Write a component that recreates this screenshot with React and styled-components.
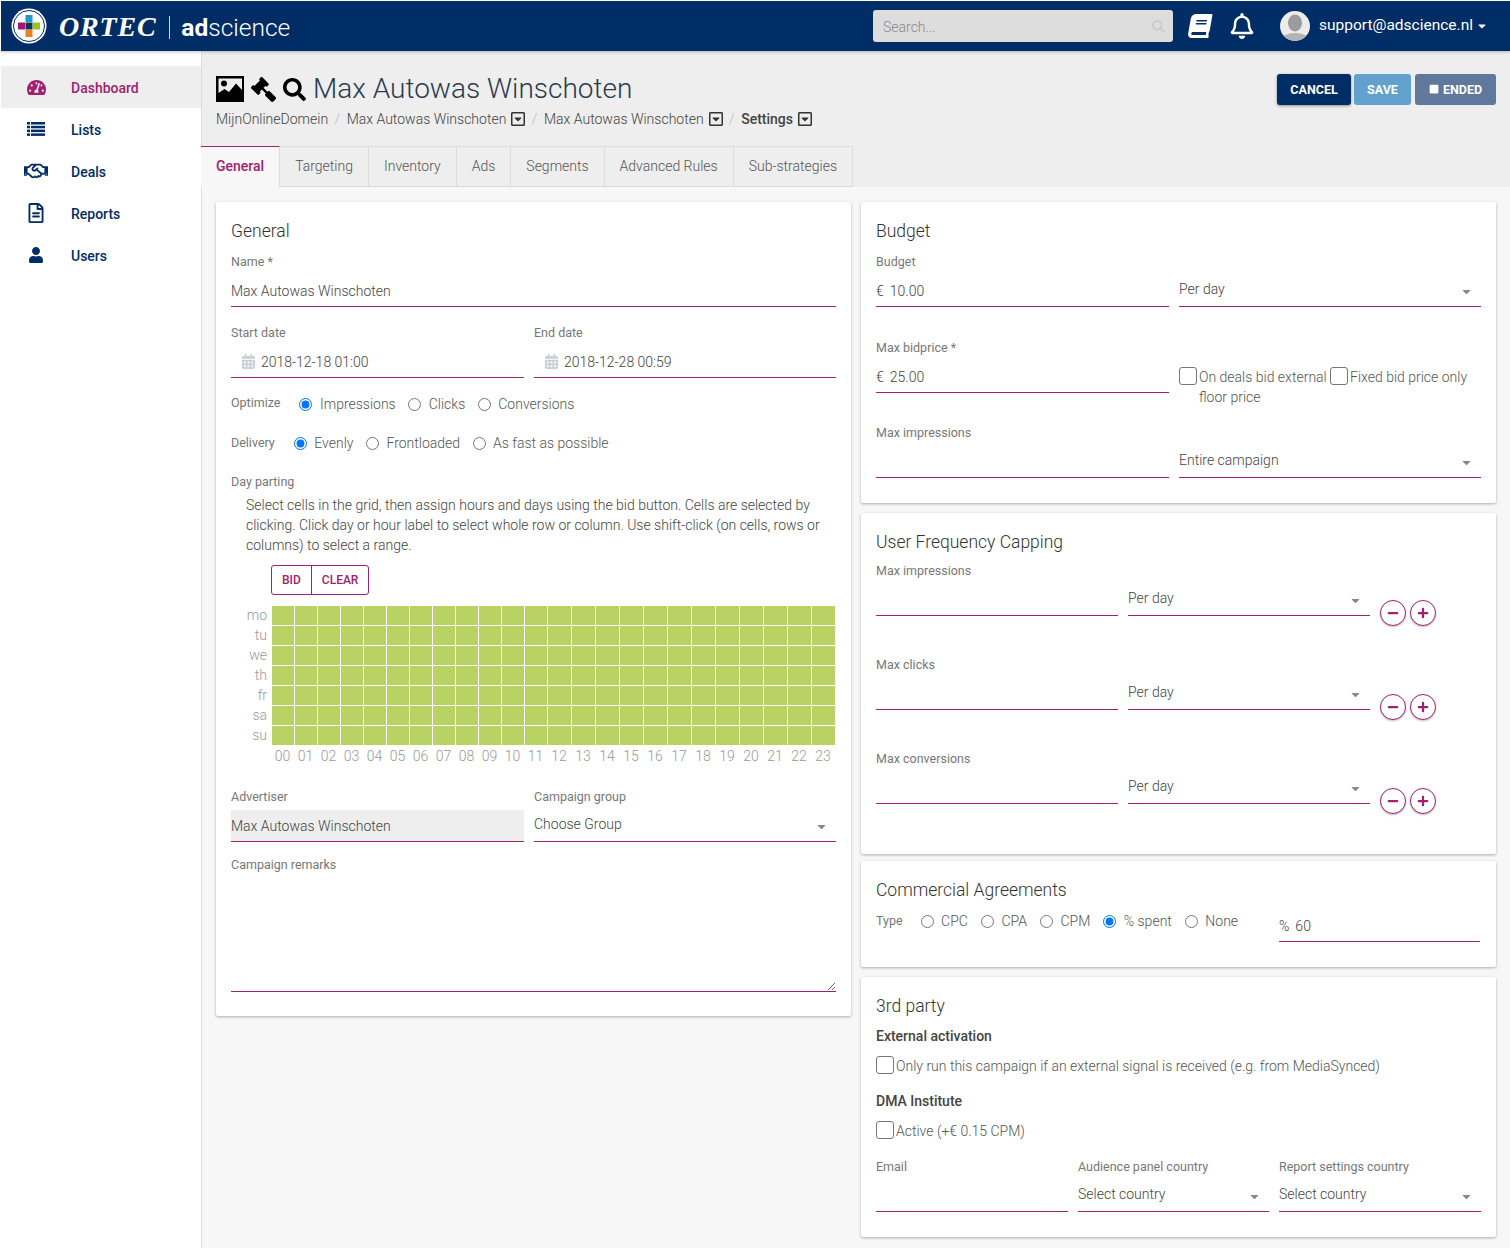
import React from 'react'
import styled, { createGlobalStyle } from 'styled-components'
import {
  FaTachometerAlt,
  FaRegHandshake,
  FaRegFileAlt,
  FaUser,
  FaGavel,
  FaSearch,
  FaBook,
  FaRegBell,
  FaCalendarAlt,
  FaRegCaretSquareDown,
  FaStop,
  FaPlus,
  FaMinus,
  FaCaretDown,
} from 'react-icons/fa'

const navy = '#002d66'
const magenta = '#a0216f'

const GlobalStyle = createGlobalStyle`
  html, body {
    margin: 0;
    padding: 0;
    background: #fff;
  }
  body {
    font-family: Roboto, "Liberation Sans", sans-serif;
    font-size: 14px;
    color: #555;
  }
  #root {
    padding: 1px 0 6px 1px;
  }
`

const Shell = styled.div`
  display: flex;
  flex-direction: column;
  height: 1247px;
  overflow: hidden;
`

const Topbar = styled.header`
  flex: none;
  height: 50px;
  display: flex;
  align-items: center;
  background: ${navy};
  box-shadow: 0 1px 3px rgba(0, 0, 0, 0.25);
  position: relative;
  z-index: 2;
`

const Logo = styled.div`
  display: flex;
  align-items: center;
  margin-left: 10px;
  color: #fff;
`

const LogoWord = styled.span`
  font-family: "Liberation Serif", serif;
  font-style: italic;
  font-weight: bold;
  font-size: 28px;
  letter-spacing: 0.8px;
  margin: 2px 0 0 12px;
  line-height: 36px;
`

const LogoBar = styled.span`
  width: 1px;
  height: 23px;
  background: #cfd8e5;
  margin: 3px 11px 0 13px;
`

const LogoProduct = styled.span`
  font-size: 24.5px;
  font-weight: 300;
  line-height: 30px;
  margin-top: 4px;
  b {
    font-weight: 700;
  }
`

const Search = styled.div`
  margin-left: auto;
  width: 300px;
  height: 32px;
  box-sizing: border-box;
  background: #ddd;
  border-radius: 3px;
  display: flex;
  align-items: center;
  justify-content: space-between;
  padding: 2px 8px 0 10px;
  color: #888;
  font-weight: 300;
  svg {
    color: #ccc;
    font-size: 13px;
    margin-top: -2px;
  }
`

const TopIcon = styled.span`
  display: flex;
  color: #fff;
  font-size: ${p => p.$size}px;
  margin-left: ${p => p.$gap}px;
  transform: ${p => (p.$skew ? 'skewX(-10deg)' : 'none')};
`

const Account = styled.div`
  display: flex;
  align-items: center;
  margin: 0 22px 0 25px;
  color: #fff;
  font-size: 15.5px;
  span {
    margin: -2px 3px 0 9px;
  }
  svg:last-child {
    font-size: 12px;
  }
`

const Body = styled.div`
  flex: 1;
  display: flex;
  min-height: 0;
`

const Sidebar = styled.nav`
  flex: none;
  width: 200px;
  padding-top: 15px;
  background: #fff;
  border-right: 1px solid #ddd;
`

const NavItem = styled.a`
  height: 42px;
  display: flex;
  align-items: center;
  font-weight: 500;
  font-size: 14px;
  line-height: 18px;
  color: ${p => (p.$active ? magenta : navy)};
  background: ${p => (p.$active ? '#eee' : 'transparent')};
`

const NavIcon = styled.span`
  width: 70px;
  display: flex;
  justify-content: center;
  font-size: ${p => p.$size}px;
`

const NavText = styled.span`
  padding-top: 2px;
`

const Main = styled.main`
  flex: 1;
  min-width: 0;
  background: #f7f7f7;
`

const Head = styled.div`
  background: #eee;
  height: 136px;
  display: flex;
  flex-direction: column;
`

const HeadRow = styled.div`
  display: flex;
  justify-content: space-between;
  padding: 23px 14px 0;
  height: 72px;
`

const PageTitle = styled.h1`
  margin: 0;
  display: flex;
  align-items: center;
  height: 30px;
  font-size: 28px;
  line-height: 30px;
  font-weight: 300;
  color: #2b3a50;
  svg {
    color: #000;
    flex: none;
  }
`

const TitleIcons = styled.span`
  display: flex;
  align-items: center;
  gap: 7px;
  margin-right: 7px;
`

const GavelIcon = styled(FaGavel)`
  transform: scaleX(-1);
`

const Crumbs = styled.div`
  display: flex;
  align-items: center;
  height: 20px;
  margin-top: 5px;
  font-weight: 300;
  color: #444;
`

const Crumb = styled.span`
  display: flex;
  align-items: center;
  font-weight: ${p => (p.$strong ? 500 : 300)};
  svg {
    margin: 0 -1px 0 4px;
    font-size: 16px;
    color: #333;
  }
`

const CrumbSep = styled.span`
  color: #bbb;
  margin: 0 6.5px;
`

const Buttons = styled.div`
  display: flex;
  gap: 3px;
  height: 31px;
`

const Button = styled.button`
  border: none;
  border-radius: 3px;
  height: 31px;
  width: ${p => p.$width}px;
  padding: 0;
  margin-left: ${p => p.$gap || 0}px;
  color: #fff;
  background: ${p => p.$bg};
  font-family: inherit;
  font-size: 12.5px;
  font-weight: 700;
  box-shadow: ${p => (p.$raised ? '0 1px 3px rgba(0,0,0,.4)' : 'none')};
  svg {
    font-size: 10px;
    margin-right: 4px;
  }
`

const Tabs = styled.div`
  display: flex;
  height: 41px;
  margin-left: -1px;
  align-items: stretch;
`

const Tab = styled.a`
  display: flex;
  align-items: center;
  box-sizing: border-box;
  padding: 0 15px 2px;
  color: ${p => (p.$active ? magenta : '#555')};
  font-weight: ${p => (p.$active ? 500 : 300)};
  background: ${p => (p.$active ? '#f7f7f7' : '#eee')};
  border-top: 1px solid ${p => (p.$active ? magenta : '#ddd')};
  border-right: 1px solid #ddd;
  border-bottom: ${p => (p.$active ? 'none' : '1px solid #ddd')};
`

const Columns = styled.div`
  display: grid;
  grid-template-columns: 635px 635px;
  gap: 10px;
  padding: 15px 14px;
  align-items: start;
`

const Stack = styled.div`
  display: flex;
  flex-direction: column;
`

const Card = styled.section`
  background: #fff;
  border-radius: 2px;
  padding: 18px 15px ${p => p.$bottom ?? 25}px;
  margin-bottom: ${p => p.$after ?? 10}px;
  box-shadow: 0 1px 3px rgba(0, 0, 0, 0.3);
`

const CardTitle = styled.h2`
  margin: 0 0 ${p => p.$after ?? 9}px;
  font-size: 17.5px;
  line-height: 22px;
  font-weight: 300;
  color: #333;
`

const Label = styled.label`
  display: block;
  height: 20px;
  line-height: 22px;
  margin-bottom: 4px;
  font-size: 12.5px;
  color: #777;
`

const Field = styled.div`
  margin-bottom: ${p => p.$after ?? 0}px;
  min-width: 0;
`

const Line = styled.div`
  height: 32px;
  box-sizing: border-box;
  display: flex;
  align-items: center;
  font-weight: 300;
  color: #444;
  background: ${p => (p.$filled ? '#eee' : 'transparent')};
  border-bottom: 1px solid ${magenta};
  padding-left: ${p => p.$inset || 0}px;
`

const Text = styled.input`
  flex: 1;
  min-width: 0;
  height: 100%;
  border: none;
  outline: none;
  padding: 0;
  background: transparent;
  font-family: inherit;
  font-size: 14px;
  font-weight: 300;
  color: #444;
`

const Unit = styled.span`
  margin-right: 6px;
`

const DateIcon = styled.span`
  display: flex;
  font-size: 15px;
  color: #c9d0d8;
  margin-right: 5px;
`

const SelectBox = styled.div`
  height: 32px;
  box-sizing: border-box;
  display: flex;
  align-items: center;
  justify-content: space-between;
  padding: 0 8px 4px 0;
  font-weight: 300;
  color: #444;
  border-bottom: 1px solid ${magenta};
  svg {
    font-size: 13px;
    color: #888;
    margin-top: 5px;
  }
`

const Pair = styled.div`
  display: grid;
  grid-template-columns: 1fr 302px;
  gap: 10px;
  margin-bottom: ${p => p.$after ?? 0}px;
`

const OptionRow = styled.div`
  display: flex;
  align-items: center;
  height: 20px;
  margin-bottom: ${p => p.$after ?? 0}px;
`

const RowLabel = styled.span`
  font-size: 12.5px;
  line-height: 18px;
  color: #777;
  margin: ${p => p.$lift || 0}px ${p => p.$gap}px 0 0;
`

const Option = styled.label`
  display: flex;
  align-items: center;
  margin-right: ${p => p.$gap}px;
  font-weight: 300;
  color: #555;
  input {
    margin: 0 7.5px 0 0;
    width: 13px;
    height: 13px;
  }
`

const Hint = styled.p`
  margin: 0 0 10px;
  padding-left: 15px;
  line-height: 20px;
  font-weight: 300;
  color: #444;
`

const ButtonGroup = styled.div`
  display: inline-flex;
  margin: 0 0 11px 40px;
  height: 30px;
  box-sizing: border-box;
  border: 1px solid ${magenta};
  border-radius: 3px;
  color: ${magenta};
  font-size: 12px;
  font-weight: 500;
  span {
    display: flex;
    align-items: center;
    padding: 0 10px;
  }
  span + span {
    border-left: 1px solid ${magenta};
  }
`

const Parting = styled.div`
  display: grid;
  grid-template-columns: 41px 563px;
  margin-bottom: 20px;
`

const DayLabels = styled.div`
  display: grid;
  grid-template-rows: repeat(7, 20px);
  text-align: right;
  padding-right: 5px;
  font-weight: 300;
  color: #999;
  line-height: 18px;
`

const Cells = styled.div`
  display: grid;
  grid-template-columns: repeat(12, 22px) repeat(12, 23px);
  grid-template-rows: repeat(7, 19px);
  gap: 1px;
  align-self: start;
  background: #fff;
`

const Cell = styled.div`
  background: #b9d264;
`

const HourLabels = styled.div`
  grid-column: 2;
  display: grid;
  grid-template-columns: repeat(12, 23px) repeat(12, 24px);
  height: 20px;
  margin-left: -1px;
  line-height: 20px;
  text-align: center;
  font-weight: 300;
  color: #999;
`

const Remarks = styled.textarea`
  display: block;
  width: 100%;
  height: 114px;
  box-sizing: border-box;
  border: none;
  border-bottom: 1px solid ${magenta};
  outline: none;
  padding: 0;
  margin-bottom: 6px;
  background: transparent;
`

const CheckRow = styled.div`
  display: flex;
  align-items: flex-start;
  padding-top: 6px;
`

const Check = styled.label`
  display: flex;
  align-items: flex-start;
  width: ${p => (p.$width ? `${p.$width}px` : 'auto')};
  margin-top: ${p => p.$top || 0}px;
  line-height: 20px;
  font-weight: 300;
  color: #555;
  input {
    appearance: none;
    flex: none;
    width: 18px;
    height: 18px;
    margin: 0 2px 0 0;
    background: #fff;
    border: 1px solid #777;
    border-radius: 3px;
  }
`

const CapRow = styled.div`
  display: grid;
  grid-template-columns: 242px 242px auto;
  column-gap: 10px;
  margin-bottom: ${p => p.$after ?? 0}px;
`

const Round = styled.div`
  display: flex;
  gap: 4px;
  padding-top: 40px;
`

const RoundButton = styled.span`
  width: 26px;
  height: 26px;
  box-sizing: border-box;
  border-radius: 50%;
  border: 1px solid ${magenta};
  color: ${magenta};
  background: #fff;
  display: flex;
  align-items: center;
  justify-content: center;
  font-size: 12px;
  box-shadow: 0 1px 2px rgba(0, 0, 0, 0.25);
`

const TypeRow = styled.div`
  display: grid;
  grid-template-columns: 1fr 201px;
  column-gap: 10px;
  padding-right: 1px;
`

const TypeOptions = styled.div`
  display: flex;
  align-items: center;
  height: 22px;
`

const Heading = styled.div`
  height: 20px;
  line-height: 20px;
  margin-top: ${p => p.$top || 0}px;
  font-weight: 500;
  color: #444;
`

const Triple = styled.div`
  display: grid;
  grid-template-columns: 192px 191px 202px;
  column-gap: 10px;
  margin-top: 15px;
`

const ImageIcon = () => (
  <svg width="28" height="26" viewBox="0 0 28 26">
    <path
      fill="#000"
      fillRule="evenodd"
      d="M0 0h28v26H0zM2.500 2.500v14.500l6-4 4.500 3 7-8.500 6 6.500V2.500z"
    />
    <circle cx="8" cy="7.500" r="3" fill="#000" />
  </svg>
)

const ListIcon = () => (
  <svg width="18" height="14" viewBox="0 0 18 14" fill="currentColor">
    <rect x="0" y="0" width="3" height="2.500" />
    <rect x="4" y="0" width="14" height="2.500" />
    <rect x="0" y="3.800" width="3" height="2.500" />
    <rect x="4" y="3.800" width="14" height="2.500" />
    <rect x="0" y="7.600" width="3" height="2.500" />
    <rect x="4" y="7.600" width="14" height="2.500" />
    <rect x="0" y="11.400" width="3" height="2.500" />
    <rect x="4" y="11.400" width="14" height="2.500" />
  </svg>
)

const LogoMark = () => (
  <svg width="36" height="36" viewBox="0 0 36 36">
    <circle cx="18" cy="18" r="17.500" fill="#fff" />
    <circle cx="18" cy="18" r="15.500" fill="none" stroke={navy} strokeWidth="1" />
    <rect x="14.500" y="7" width="7" height="7" fill="#1e9cc4" />
    <rect x="7" y="14.500" width="7" height="7" fill="#a2176f" />
    <rect x="14.500" y="14.500" width="7" height="7" fill="#10324f" />
    <rect x="22" y="14.500" width="7" height="7" fill="#9ac31c" />
    <rect x="14.500" y="22" width="7" height="7" fill="#ee7f22" />
  </svg>
)

const Avatar = () => (
  <svg width="30" height="30" viewBox="0 0 30 30">
    <clipPath id="avatar-clip">
      <circle cx="15" cy="15" r="15" />
    </clipPath>
    <g clipPath="url(#avatar-clip)">
      <rect width="30" height="30" fill="#ececec" />
      <ellipse cx="15" cy="12" rx="7" ry="8.500" fill="#9c9c9c" />
      <ellipse cx="15" cy="30" rx="15" ry="8" fill="#b4b4b4" />
    </g>
  </svg>
)

const Input = ({ value, unit }) => (
  <Line>
    {unit && <Unit>{unit}</Unit>}
    <Text defaultValue={value} />
  </Line>
)

const Select = ({ value }) => (
  <SelectBox>
    {value}
    <FaCaretDown />
  </SelectBox>
)

const DateInput = ({ value }) => (
  <Line $inset={10}>
    <DateIcon>
      <FaCalendarAlt />
    </DateIcon>
    <Text defaultValue={value} />
  </Line>
)

const Radios = ({ name, items, checked, gap = 13 }) =>
  items.map(label => (
    <Option key={label} $gap={gap}>
      <input type="radio" name={name} defaultChecked={label === checked} />
      {label}
    </Option>
  ))

const nav = [
  ['Dashboard', FaTachometerAlt, 19],
  ['Lists', ListIcon, 18],
  ['Deals', FaRegHandshake, 24],
  ['Reports', FaRegFileAlt, 20],
  ['Users', FaUser, 16],
]

const tabs = ['General', 'Targeting', 'Inventory', 'Ads', 'Segments', 'Advanced Rules', 'Sub-strategies']
const days = ['mo', 'tu', 'we', 'th', 'fr', 'sa', 'su']
const hours = Array.from({ length: 24 }, (_, i) => String(i).padStart(2, '0'))

const CapField = ({ label, after }) => (
  <CapRow $after={after}>
    <Field>
      <Label>{label}</Label>
      <Input />
    </Field>
    <Field>
      <Label>&nbsp;</Label>
      <Select value="Per day" />
    </Field>
    <Round>
      <RoundButton>
        <FaMinus />
      </RoundButton>
      <RoundButton>
        <FaPlus />
      </RoundButton>
    </Round>
  </CapRow>
)

export default function App() {
  return (
    <Shell>
      <GlobalStyle />
      <Topbar>
        <Logo>
          <LogoMark />
          <LogoWord>ORTEC</LogoWord>
          <LogoBar />
          <LogoProduct>
            <b>ad</b>science
          </LogoProduct>
        </Logo>
        <Search>
          Search...
          <FaSearch />
        </Search>
        <TopIcon $gap={15} $size={24} $skew>
          <FaBook />
        </TopIcon>
        <TopIcon $gap={17} $size={26}>
          <FaRegBell />
        </TopIcon>
        <Account>
          <Avatar />
          <span>support@adscience.nl</span>
          <FaCaretDown />
        </Account>
      </Topbar>
      <Body>
        <Sidebar>
          {nav.map(([label, Icon, size], i) => (
            <NavItem key={label} $active={i === 0}>
              <NavIcon $size={size}>
                <Icon />
              </NavIcon>
              <NavText>{label}</NavText>
            </NavItem>
          ))}
        </Sidebar>
        <Main>
          <Head>
            <HeadRow>
              <div>
                <PageTitle>
                  <TitleIcons>
                    <ImageIcon />
                    <GavelIcon size={25} />
                    <FaSearch size={23} />
                  </TitleIcons>
                  Max Autowas Winschoten
                </PageTitle>
                <Crumbs>
                  <Crumb>MijnOnlineDomein</Crumb>
                  <CrumbSep>/</CrumbSep>
                  <Crumb>
                    Max Autowas Winschoten
                    <FaRegCaretSquareDown />
                  </Crumb>
                  <CrumbSep>/</CrumbSep>
                  <Crumb>
                    Max Autowas Winschoten
                    <FaRegCaretSquareDown />
                  </Crumb>
                  <CrumbSep>/</CrumbSep>
                  <Crumb $strong>
                    Settings
                    <FaRegCaretSquareDown />
                  </Crumb>
                </Crumbs>
              </div>
              <Buttons>
                <Button $width={74} $bg={navy} $raised>
                  CANCEL
                </Button>
                <Button $width={57} $bg="#62a0cd">
                  SAVE
                </Button>
                <Button $width={81} $bg="#60789c" $gap={1}>
                  <FaStop />
                  ENDED
                </Button>
              </Buttons>
            </HeadRow>
            <Tabs>
              {tabs.map((tab, i) => (
                <Tab key={tab} $active={i === 0}>
                  {tab}
                </Tab>
              ))}
            </Tabs>
          </Head>
          <Columns>
            <Stack>
              <Card $bottom={18} $after={0}>
                <CardTitle>General</CardTitle>
                <Field $after={15}>
                  <Label>Name *</Label>
                  <Input value="Max Autowas Winschoten" />
                </Field>
                <Pair $after={16}>
                  <Field>
                    <Label>Start date</Label>
                    <DateInput value="2018-12-18 01:00" />
                  </Field>
                  <Field>
                    <Label>End date</Label>
                    <DateInput value="2018-12-28 00:59" />
                  </Field>
                </Pair>
                <OptionRow $after={19}>
                  <RowLabel $gap={19} $lift={-3}>
                    Optimize
                  </RowLabel>
                  <Radios
                    name="optimize"
                    checked="Impressions"
                    items={['Impressions', 'Clicks', 'Conversions']}
                    gap={12.5}
                  />
                </OptionRow>
                <OptionRow $after={18}>
                  <RowLabel $gap={19} $lift={-1}>
                    Delivery
                  </RowLabel>
                  <Radios
                    name="delivery"
                    checked="Evenly"
                    items={['Evenly', 'Frontloaded', 'As fast as possible']}
                    gap={12.5}
                  />
                </OptionRow>
                <Label>Day parting</Label>
                <Hint>
                  Select cells in the grid, then assign hours and days using the bid button. Cells are selected by
                  clicking. Click day or hour label to select whole row or column. Use shift-click (on cells, rows or
                  columns) to select a range.
                </Hint>
                <ButtonGroup>
                  <span>BID</span>
                  <span>CLEAR</span>
                </ButtonGroup>
                <Parting>
                  <DayLabels>
                    {days.map(day => (
                      <span key={day}>{day}</span>
                    ))}
                  </DayLabels>
                  <Cells>
                    {Array.from({ length: 168 }, (_, i) => (
                      <Cell key={i} />
                    ))}
                  </Cells>
                  <HourLabels>
                    {hours.map(hour => (
                      <span key={hour}>{hour}</span>
                    ))}
                  </HourLabels>
                </Parting>
                <Pair $after={12}>
                  <Field>
                    <Label>Advertiser</Label>
                    <Line $filled>Max Autowas Winschoten</Line>
                  </Field>
                  <Field>
                    <Label>Campaign group</Label>
                    <Select value="Choose Group" />
                  </Field>
                </Pair>
                <Label>Campaign remarks</Label>
                <Remarks />
              </Card>
            </Stack>
            <Stack>
              <Card>
                <CardTitle>Budget</CardTitle>
                <Pair $after={30}>
                  <Field>
                    <Label>Budget</Label>
                    <Input unit="€" value="10.00" />
                  </Field>
                  <Field>
                    <Label>&nbsp;</Label>
                    <Select value="Per day" />
                  </Field>
                </Pair>
                <Pair $after={15}>
                  <Field>
                    <Label>Max bidprice *</Label>
                    <Input unit="€" value="25.00" />
                  </Field>
                  <Field>
                    <Label>&nbsp;</Label>
                    <CheckRow>
                      <Check $width={151}>
                        <input type="checkbox" />
                        On deals bid external floor price
                      </Check>
                      <Check>
                        <input type="checkbox" />
                        Fixed bid price only
                      </Check>
                    </CheckRow>
                  </Field>
                </Pair>
                <Pair>
                  <Field>
                    <Label>Max impressions</Label>
                    <Input />
                  </Field>
                  <Field>
                    <Label>&nbsp;</Label>
                    <Select value="Entire campaign" />
                  </Field>
                </Pair>
              </Card>
              <Card $bottom={40} $after={7}>
                <CardTitle $after={7}>User Frequency Capping</CardTitle>
                <CapField label="Max impressions" after={28} />
                <CapField label="Max clicks" after={28} />
                <CapField label="Max conversions" />
              </Card>
              <Card>
                <CardTitle>Commercial Agreements</CardTitle>
                <TypeRow>
                  <TypeOptions>
                    <RowLabel $gap={18}>Type</RowLabel>
                    <Radios name="type" checked="% spent" items={['CPC', 'CPA', 'CPM', '% spent', 'None']} />
                  </TypeOptions>
                  <Input unit="%" value="60" />
                </TypeRow>
              </Card>
              <Card $after={0}>
                <CardTitle>3rd party</CardTitle>
                <Heading>External activation</Heading>
                <Check $top={10}>
                  <input type="checkbox" />
                  Only run this campaign if an external signal is received (e.g. from MediaSynced)
                </Check>
                <Heading $top={15}>DMA Institute</Heading>
                <Check $top={10}>
                  <input type="checkbox" />
                  Active (+€ 0.15 CPM)
                </Check>
                <Triple>
                  <Field>
                    <Label>Email</Label>
                    <Input />
                  </Field>
                  <Field>
                    <Label>Audience panel country</Label>
                    <Select value="Select country" />
                  </Field>
                  <Field>
                    <Label>Report settings country</Label>
                    <Select value="Select country" />
                  </Field>
                </Triple>
              </Card>
            </Stack>
          </Columns>
        </Main>
      </Body>
    </Shell>
  )
}
